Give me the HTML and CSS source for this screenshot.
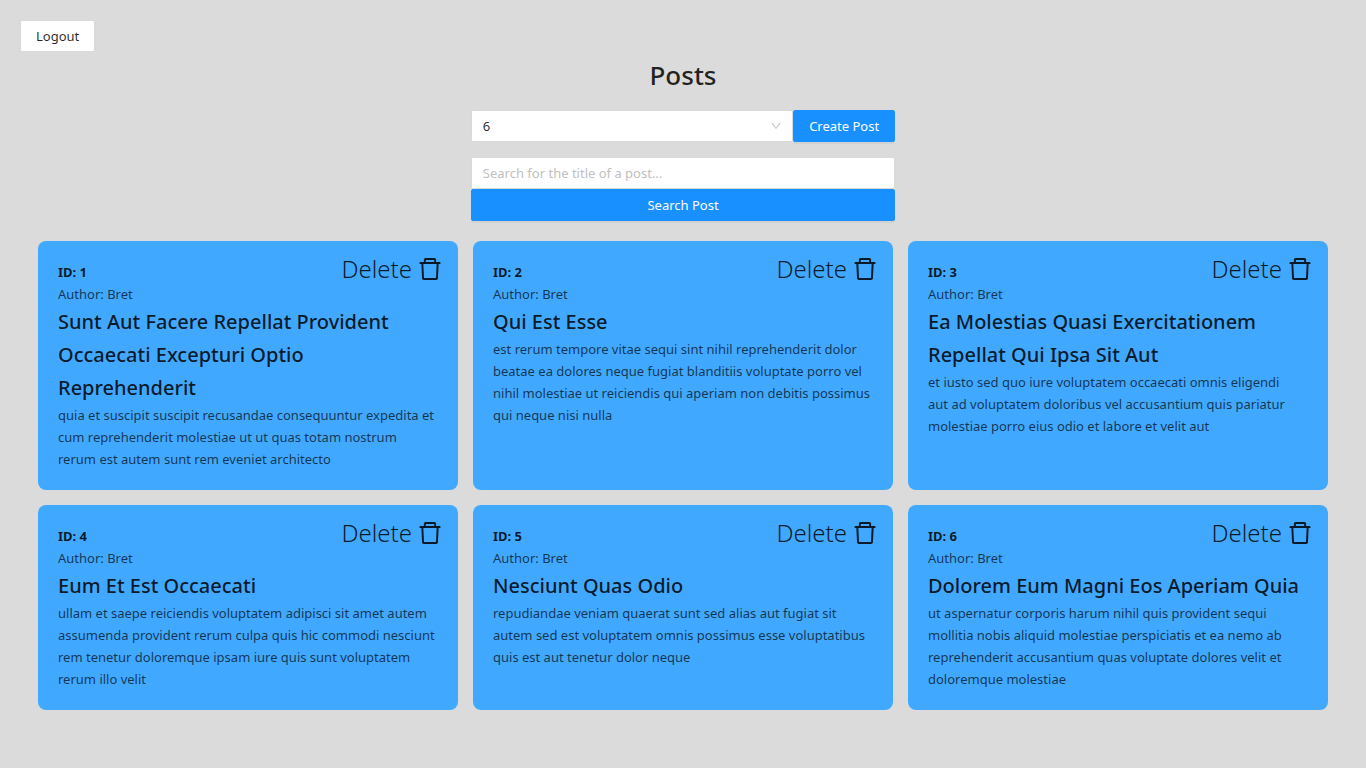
FILE: index.html
```html
<!DOCTYPE html>
<html lang="en">
<head>
<meta charset="utf-8">
<meta name="viewport" content="width=device-width, initial-scale=1">
<title>Posts</title>
<link rel="stylesheet" href="styles.css">
</head>
<body>
<svg class="sprite" aria-hidden="true">
  <symbol id="trash" viewBox="0 0 1024 1024"><path d="M360 184h-8c4.400 0 8-3.600 8-8v8h304v-8c0 4.400 3.600 8 8 8h-8v72h72v-80c0-35.300-28.700-64-64-64H352c-35.300 0-64 28.700-64 64v80h72v-72zm504 72H160c-17.700 0-32 14.300-32 32v32c0 4.400 3.600 8 8 8h60.400l24.700 523c1.600 34.100 29.800 61 63.900 61h454c34.200 0 62.300-26.800 63.900-61l24.700-523H888c4.400 0 8-3.600 8-8v-32c0-17.700-14.300-32-32-32zM731.300 840H292.700l-24.200-512h487l-24.200 512z"/></symbol>
</svg>
<header class="topbar">
  <button class="btn" type="button">Logout</button>
</header>
<main>
  <h1 class="page-title">Posts</h1>
  <div class="tools">
    <div class="tools-row">
      <div class="select-wrap">
        <select class="field select" aria-label="Posts per page"><option>6</option><option>12</option><option>24</option></select>
        <svg class="arrow" viewBox="0 0 1024 1024" aria-hidden="true"><path d="M884 256h-75c-5.100 0-9.900 2.500-12.900 6.600L512 654.200 227.900 262.600c-3-4.100-7.800-6.600-12.900-6.600h-75c-6.500 0-10.300 7.400-6.500 12.700l352.600 486.100c12.800 17.600 39 17.600 51.700 0l352.600-486.100c3.900-5.300.1-12.700-6.400-12.700z"/></svg>
      </div>
      <button class="btn btn-primary" type="button">Create Post</button>
    </div>
    <form class="search">
      <input class="field" type="text" aria-label="Search for the title of a post" placeholder="Search for the title of a post...">
      <button class="btn btn-primary" type="button">Search Post</button>
    </form>
  </div>
  <section class="grid">
    <article class="card">
      <div class="card-head"><div><p class="id">ID: 1</p><p>Author: Bret</p></div><button class="delete" type="button">Delete<svg class="trash" aria-hidden="true"><use href="#trash"/></svg></button></div>
      <h2 class="card-title">Sunt Aut Facere Repellat Provident Occaecati Excepturi Optio Reprehenderit</h2>
      <p>quia et suscipit suscipit recusandae consequuntur expedita et cum reprehenderit molestiae ut ut quas totam nostrum rerum est autem sunt rem eveniet architecto</p>
    </article>
    <article class="card">
      <div class="card-head"><div><p class="id">ID: 2</p><p>Author: Bret</p></div><button class="delete" type="button">Delete<svg class="trash" aria-hidden="true"><use href="#trash"/></svg></button></div>
      <h2 class="card-title">Qui Est Esse</h2>
      <p>est rerum tempore vitae sequi sint nihil reprehenderit dolor beatae ea dolores neque fugiat blanditiis voluptate porro vel nihil molestiae ut reiciendis qui aperiam non debitis possimus qui neque nisi nulla</p>
    </article>
    <article class="card">
      <div class="card-head"><div><p class="id">ID: 3</p><p>Author: Bret</p></div><button class="delete" type="button">Delete<svg class="trash" aria-hidden="true"><use href="#trash"/></svg></button></div>
      <h2 class="card-title">Ea Molestias Quasi Exercitationem Repellat Qui Ipsa Sit Aut</h2>
      <p>et iusto sed quo iure voluptatem occaecati omnis eligendi<br>aut ad voluptatem doloribus vel accusantium quis pariatur molestiae porro eius odio et labore et velit aut</p>
    </article>
    <article class="card">
      <div class="card-head"><div><p class="id">ID: 4</p><p>Author: Bret</p></div><button class="delete" type="button">Delete<svg class="trash" aria-hidden="true"><use href="#trash"/></svg></button></div>
      <h2 class="card-title">Eum Et Est Occaecati</h2>
      <p>ullam et saepe reiciendis voluptatem adipisci sit amet autem assumenda provident rerum culpa quis hic commodi nesciunt rem tenetur doloremque ipsam iure quis sunt voluptatem rerum illo velit</p>
    </article>
    <article class="card">
      <div class="card-head"><div><p class="id">ID: 5</p><p>Author: Bret</p></div><button class="delete" type="button">Delete<svg class="trash" aria-hidden="true"><use href="#trash"/></svg></button></div>
      <h2 class="card-title">Nesciunt Quas Odio</h2>
      <p>repudiandae veniam quaerat sunt sed alias aut fugiat sit autem sed est voluptatem omnis possimus esse voluptatibus quis est aut tenetur dolor neque</p>
    </article>
    <article class="card">
      <div class="card-head"><div><p class="id">ID: 6</p><p>Author: Bret</p></div><button class="delete" type="button">Delete<svg class="trash" aria-hidden="true"><use href="#trash"/></svg></button></div>
      <h2 class="card-title">Dolorem Eum Magni Eos Aperiam Quia</h2>
      <p>ut aspernatur corporis harum nihil quis provident sequi mollitia nobis aliquid molestiae perspiciatis et ea nemo ab reprehenderit accusantium quas voluptate dolores velit et doloremque molestiae</p>
    </article>
  </section>
</main>
</body>
</html>
```
FILE: styles.css
```css
* { box-sizing: border-box; }

body {
  margin: 0;
  padding: 20px;
  background: #dbdbdb;
  color: rgba(0, 0, 0, 0.7);
  font-family: "Segoe UI", "Noto Sans", "Open Sans", sans-serif;
  font-size: 13px;
  line-height: 22px;
}

button, input, select { font: inherit; }
h1, h2, p { margin: 0; }
.sprite { display: none; }

.topbar { display: flex; }

.btn {
  height: 32px;
  padding: 0 15px;
  border: 1px solid #d9d9d9;
  border-radius: 2px;
  background: #fff;
  color: rgba(0, 0, 0, 0.85);
  cursor: pointer;
}

.btn-primary {
  border-color: #1890ff;
  background: #1890ff;
  color: #fff;
  box-shadow: 0 2px 0 rgba(0, 0, 0, 0.04);
}

.page-title {
  margin-bottom: 12px;
  color: rgba(0, 0, 0, 0.85);
  font-size: 26px;
  font-weight: 500;
  line-height: 46px;
  text-align: center;
}

.tools { width: 32%; margin: 0 auto 20px; }
.tools-row { display: flex; margin-bottom: 15px; }
.select-wrap { position: relative; flex: 1; }

.field {
  display: block;
  width: 100%;
  height: 32px;
  padding: 0 11px;
  border: 1px solid #d9d9d9;
  border-radius: 2px;
  background: #fff;
  color: rgba(0, 0, 0, 0.85);
}

.field::placeholder { color: #bfbfbf; opacity: 1; }
.select { appearance: none; }

.arrow {
  position: absolute;
  top: 10px;
  right: 11px;
  width: 12px;
  height: 12px;
  fill: #bfbfbf;
  pointer-events: none;
}

.search { display: flex; flex-direction: column; }

.grid {
  display: grid;
  grid-template-columns: repeat(3, minmax(0, 1fr));
  gap: 15px;
  padding: 0 18px;
}

.card {
  padding: 20px;
  border-radius: 8px;
  background: #40a9ff;
}

.card-head {
  display: flex;
  justify-content: space-between;
  align-items: flex-start;
}

.id { color: rgba(0, 0, 0, 0.85); font-weight: 700; }

.delete {
  display: flex;
  align-items: center;
  gap: 4px;
  height: 16px;
  margin-right: -6px;
  padding: 0;
  border: 0;
  background: none;
  color: rgba(0, 0, 0, 0.85);
  font-size: 24px;
  font-weight: 300;
  cursor: pointer;
}

.trash { width: 28px; height: 28px; fill: currentColor; }

.card-title {
  color: rgba(0, 0, 0, 0.85);
  font-size: 20px;
  font-weight: 500;
  line-height: 33px;
}
```
